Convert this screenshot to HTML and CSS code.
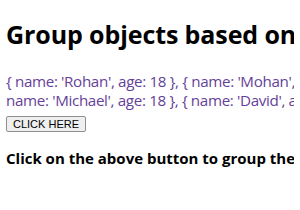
FILE: index.html
```html
<!DOCTYPE html>
<html>
<head>
<meta charset="utf-8">
<link rel="stylesheet" href="styles.css">
</head>
<body>
<div class="page">
<h1 class="title">Group objects based on property</h1>
<div class="data">{ name: 'Rohan', age: 18 }, { name: 'Mohan', age: 20 }, { name: 'Michael', age: 18 }, { name: 'David', age: 20 }</div>
<button class="btn">CLICK HERE</button>
<p class="note">Click on the above button to group the objects based on age.</p>
</div>
</body>
</html>
```
FILE: styles.css
```css
html, body { overflow: hidden; }
body {
  margin: 8px 6px;
  font-family: "Open Sans", "Noto Sans", sans-serif;
  background: #fff;
  color: #000;
}
.page { width: 388px; }
.title {
  font-size: 25px;
  font-weight: bold;
  margin: 10px 0 0;
  line-height: 32px;
  white-space: nowrap;
  letter-spacing: -0.1px;
}
.data {
  color: #653f99;
  font-size: 15.2px;
  letter-spacing: -0.35px;
  line-height: 19px;
  margin-top: 22px;
}
.btn {
  display: block;
  margin-top: 6px;
  font-family: "Liberation Sans", Arial, sans-serif;
  font-size: 11px;
  line-height: 12px;
  padding: 1px 6px;
  background: #efefef;
  border: 1px solid #8f8f8f;
  border-radius: 2px;
  color: #000;
}
.note {
  font-size: 15px;
  font-weight: bold;
  line-height: 20px;
  margin: 16px 0;
  white-space: nowrap;
}
```
